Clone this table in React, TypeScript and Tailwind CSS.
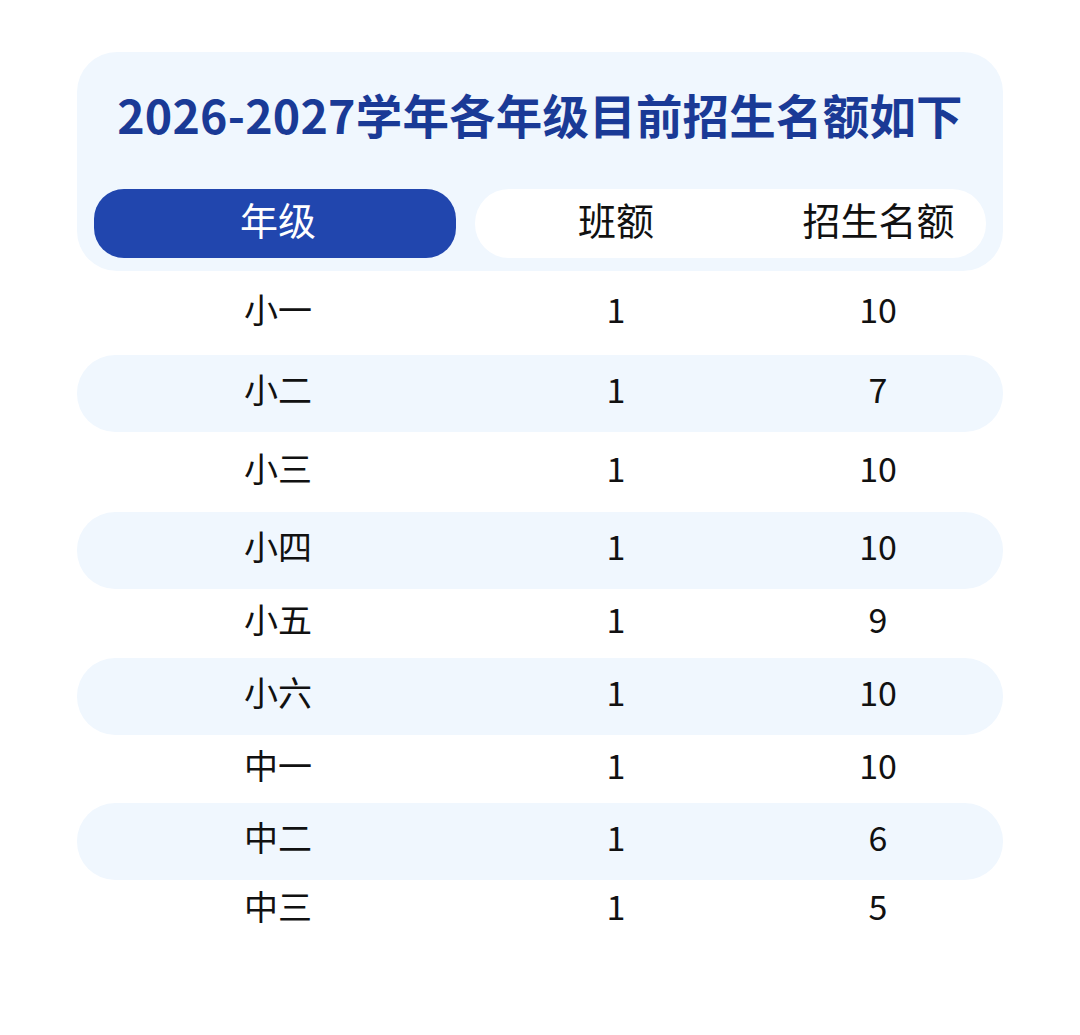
const rows = [
  { grade: "小一", classes: "1", seats: "10", h: "h-[84px]", striped: false },
  { grade: "小二", classes: "1", seats: "7", h: "h-[77px]", striped: true },
  { grade: "小三", classes: "1", seats: "10", h: "h-[80px]", striped: false },
  { grade: "小四", classes: "1", seats: "10", h: "h-[77px]", striped: true },
  { grade: "小五", classes: "1", seats: "9", h: "h-[69px]", striped: false },
  { grade: "小六", classes: "1", seats: "10", h: "h-[77px]", striped: true },
  { grade: "中一", classes: "1", seats: "10", h: "h-[68px]", striped: false },
  { grade: "中二", classes: "1", seats: "6", h: "h-[77px]", striped: true },
  { grade: "中三", classes: "1", seats: "5", h: "h-[60px]", striped: false },
];

export default function App() {
  return (
    <div className="min-h-[1035px] w-[1080px] bg-white pt-[52px] font-['Noto_Sans_CJK_SC','Noto_Sans',sans-serif]">
      <div className="mx-auto w-[926px]">
        {/* Title card with the header row */}
        <div className="rounded-[40px] bg-[#f0f7fe] px-[17px] pb-[13px] pt-[30px]">
          <h1 className="text-center text-[46.5px] font-bold leading-[64px] tracking-[0.2px] text-[#1a3a96]">
            2026-2027学年各年级目前招生名额如下
          </h1>
          <div className="mt-[43px] flex gap-[19px]">
            <div className="flex h-[69px] w-[362px] items-center justify-center rounded-[30px] bg-[#2146ae] pb-[9px] pl-[6px] text-[38px] leading-none text-white">
              年级
            </div>
            <div className="flex h-[69px] flex-1 items-center rounded-[34px] bg-white pb-[9px] text-[38px] leading-none text-[#111]">
              <div className="w-[282px] text-center">班额</div>
              <div className="flex-1 pl-[14px] text-center">招生名额</div>
            </div>
          </div>
        </div>

        {/* Rows */}
        <div className="flex flex-col">
          {rows.map((r) => (
            <div
              key={r.grade}
              className={`grid grid-cols-[402px_274px_250px] items-center rounded-[38px] pb-[9px] text-[34px] leading-none text-[#111] ${r.h} ${r.striped ? "bg-[#f0f7fe]" : ""}`}
            >
              <div className="text-center">{r.grade}</div>
              <div className="text-center">{r.classes}</div>
              <div className="text-center">{r.seats}</div>
            </div>
          ))}
        </div>
      </div>
    </div>
  );
}
